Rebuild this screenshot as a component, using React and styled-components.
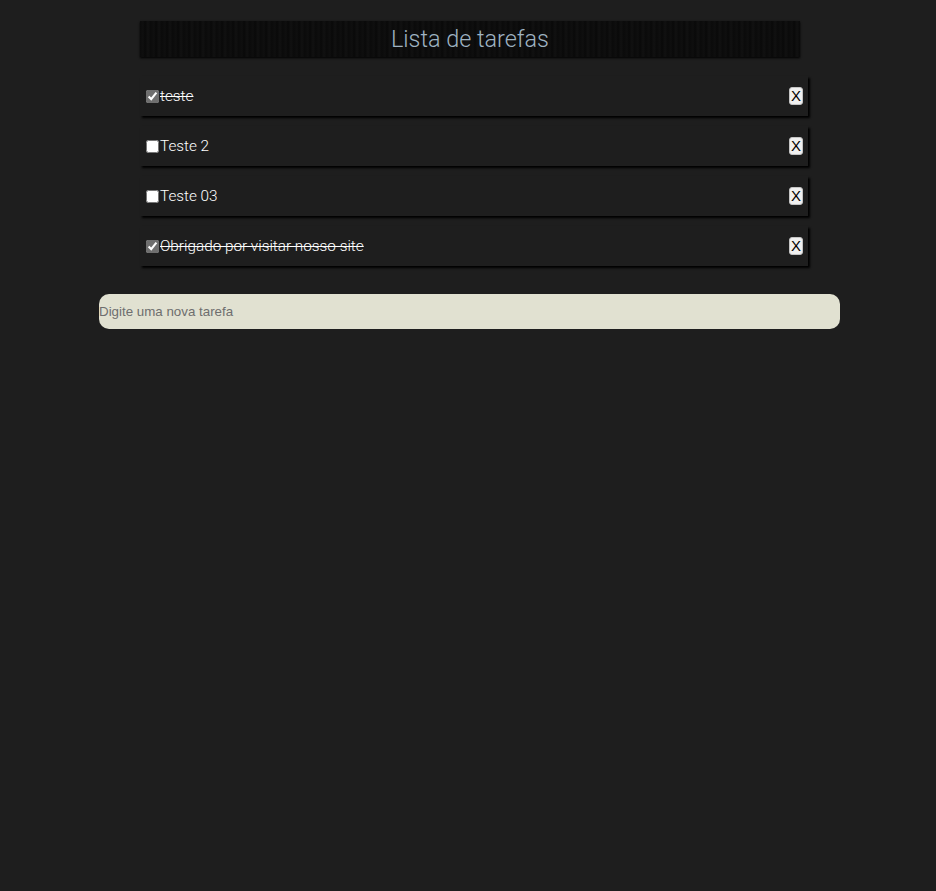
import React, { useState } from 'react';
import styled, { createGlobalStyle } from 'styled-components';

const GlobalStyle = createGlobalStyle`
    body {
        margin: 0;
        background: #1e1e1e;
        font-family: Roboto, "Liberation Sans", sans-serif;
    }
`;

const initialTasks = [
    { id: 1, text: 'teste', done: true },
    { id: 2, text: 'Teste 2', done: false },
    { id: 3, text: 'Teste 03', done: false },
    { id: 4, text: 'Obrigado por visitar nosso site', done: true },
];

const App = () => {
    const [tasks, setTasks] = useState(initialTasks);
    const [value, setValue] = useState('');

    const toggle = (id) => {
        setTasks(tasks.map((t) => (t.id === id ? { ...t, done: !t.done } : t)));
    };

    const remove = (id) => {
        setTasks(tasks.filter((t) => t.id !== id));
    };

    const add = (event) => {
        event.preventDefault();
        if (!value.trim()) return;
        setTasks([...tasks, { id: Date.now(), text: value, done: false }]);
        setValue('');
    };

    return (
        <Page>
            <GlobalStyle />
            <Header>
                <Title>Lista de tarefas</Title>
            </Header>
            <List>
                {tasks.map((task) => (
                    <Item key={task.id}>
                        <Label>
                            <Check
                                type="checkbox"
                                checked={task.done}
                                onChange={() => toggle(task.id)}
                            />
                            <TaskText $done={task.done}>{task.text}</TaskText>
                        </Label>
                        <RemoveButton onClick={() => remove(task.id)}>X</RemoveButton>
                    </Item>
                ))}
            </List>
            <Form onSubmit={add}>
                <NewTask
                    placeholder="Digite uma nova tarefa"
                    value={value}
                    onChange={(e) => setValue(e.target.value)}
                />
            </Form>
        </Page>
    );
};

export default App;

const Page = styled.div`
    display: flex;
    flex-direction: column;
    align-items: center;
    padding: 21px 0 0 5px;
`;

const Header = styled.header`
    width: 660px;
    height: 36px;
    display: flex;
    align-items: center;
    justify-content: center;
    margin-left: -1px;
    background: repeating-linear-gradient(
        90deg,
        #0b0b0b 0px,
        #0f0f0f 3px,
        #090909 5px,
        #111111 8px,
        #0a0a0a 11px
    );
    box-shadow: 0 1px 2px #000;
`;

const Title = styled.h1`
    margin: 0;
    font-size: 23.4px;
    font-weight: 300;
    color: #9fb3c2;
`;

const List = styled.ul`
    list-style: none;
    margin: 19px 0 0;
    padding: 0;
    display: flex;
    flex-direction: column;
    gap: 10px;
`;

const Item = styled.li`
    width: 668px;
    height: 40px;
    box-sizing: border-box;
    display: flex;
    align-items: center;
    justify-content: space-between;
    padding: 0 6px;
    margin-left: 7px;
    background: #1e1e1e;
    box-shadow: 2px 2px 2px #000;
`;

const Label = styled.label`
    display: flex;
    align-items: center;
`;

const Check = styled.input`
    width: 13px;
    height: 13px;
    margin: 0 1px 0 0;
    accent-color: #6f6f6f;
`;

const TaskText = styled.span`
    font-size: 15.3px;
    font-weight: 300;
    color: #ffffff;
    text-decoration: ${(props) => (props.$done ? 'line-through' : 'none')};
`;

const RemoveButton = styled.button`
    font-family: "Liberation Sans", Arial, sans-serif;
    font-size: 15px;
    line-height: 16px;
    padding: 0 1px;
    margin-right: -1px;
    background: #f0f0f0;
    color: #000;
    border: 1px solid #c4c4c4;
    border-radius: 3px;
    cursor: pointer;
`;

const Form = styled.form`
    margin-top: 28px;
`;

const NewTask = styled.input`
    width: 741px;
    height: 35px;
    box-sizing: border-box;
    margin-left: -2px;
    padding: 0;
    border: none;
    border-radius: 10px;
    background: #e1e1d1;
    font-family: "Liberation Sans", Arial, sans-serif;
    font-size: 13.333px;
    color: #333;
    outline: none;

    &::placeholder {
        color: #6e6e6e;
    }
`;
